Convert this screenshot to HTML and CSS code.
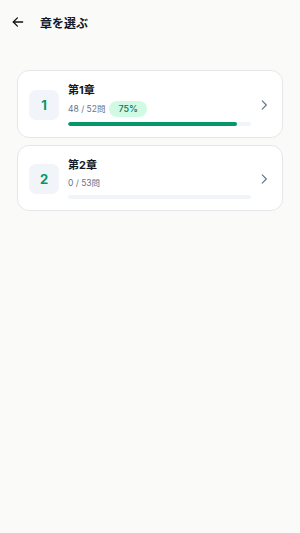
FILE: index.html
```html
<!DOCTYPE html>
<html lang="ja">
<head>
    <meta charset="UTF-8">
    <meta name="viewport" content="width=device-width, initial-scale=1.0">
    <title>章を選ぶ</title>
    <link rel="stylesheet" href="styles.css">
</head>
<body>
    <header class="topbar">
        <button class="back" aria-label="戻る">
            <svg width="14" height="14" viewBox="0 0 24 24" fill="none" stroke="#111" stroke-width="2.2" stroke-linecap="round" stroke-linejoin="round"><path d="M20 12H4"/><path d="M11 5l-7 7 7 7"/></svg>
        </button>
        <h1>章を選ぶ</h1>
    </header>

    <main class="list">
        <a class="chapter" href="#">
            <div class="num">1</div>
            <div class="info">
                <div class="name">第1章</div>
                <div class="meta">
                    <span>48 / 52問</span>
                    <span class="badge">75%</span>
                </div>
                <div class="bar"><div style="width: 92.3%"></div></div>
            </div>
            <svg class="chev" width="14" height="14" viewBox="0 0 24 24" fill="none" stroke="#64748b" stroke-width="2" stroke-linecap="round" stroke-linejoin="round"><path d="M9 5l7 7-7 7"/></svg>
        </a>

        <a class="chapter" href="#">
            <div class="num">2</div>
            <div class="info">
                <div class="name">第2章</div>
                <div class="meta">
                    <span>0 / 53問</span>
                </div>
                <div class="bar"><div style="width: 0%"></div></div>
            </div>
            <svg class="chev" width="14" height="14" viewBox="0 0 24 24" fill="none" stroke="#64748b" stroke-width="2" stroke-linecap="round" stroke-linejoin="round"><path d="M9 5l7 7-7 7"/></svg>
        </a>
    </main>
</body>
</html>
```

FILE: styles.css
```css
body {
    font-family: Inter, "Noto Sans CJK JP", sans-serif;
    color: #111827;
    background-color: #fafaf9;
    margin: 0;
}
.topbar {
    display: flex;
    align-items: center;
    height: 44px;
    padding: 0 11px;
}
.back {
    display: flex;
    align-items: center;
    background: none;
    border: none;
    padding: 0;
    margin-right: 15px;
    cursor: pointer;
}
.topbar h1 {
    font-size: 12px;
    font-weight: 700;
    margin: 0;
}
.list {
    display: flex;
    flex-direction: column;
    gap: 7px;
    padding: 26px 17px 0;
}
.chapter {
    display: flex;
    align-items: center;
    gap: 9px;
    padding: 12px 11px 11px 11px;
    background: white;
    border: 1px solid #e5e7eb;
    border-radius: 12px;
    text-decoration: none;
    color: inherit;
}
.num {
    flex: none;
    width: 30px;
    height: 30px;
    display: flex;
    align-items: center;
    justify-content: center;
    background: #f1f5f9;
    border-radius: 7px;
    color: #059669;
    font-size: 13px;
    font-weight: 700;
}
.info {
    flex: 1;
}
.name {
    font-size: 11px;
    font-weight: 700;
    line-height: 14px;
}
.meta {
    display: flex;
    align-items: center;
    gap: 4px;
    margin-top: 4px;
    font-size: 8.5px;
    line-height: 14px;
    color: #64748b;
}
.badge {
    background: #d1fae5;
    color: #047857;
    font-size: 9px;
    font-weight: 500;
    padding: 1px 9px;
    border-radius: 8px;
}
.bar {
    height: 4px;
    margin-top: 5px;
    background: #f1f5f9;
    border-radius: 2px;
    overflow: hidden;
}
.bar div {
    height: 100%;
    background: #059669;
    border-radius: 2px;
}
.chev {
    flex: none;
    margin-left: -3px;
}
```
